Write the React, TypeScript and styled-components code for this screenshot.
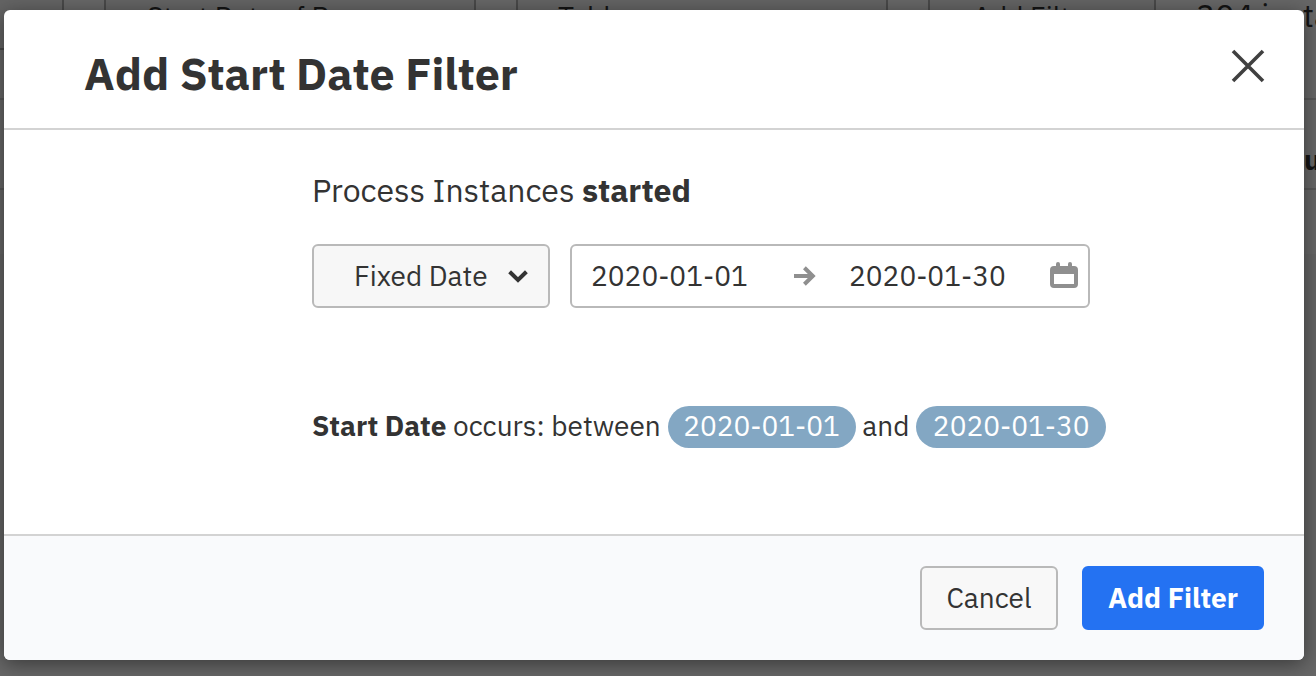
import React from 'react';
import styled, { createGlobalStyle } from 'styled-components';

const GlobalStyle = createGlobalStyle`
  *, *::before, *::after { box-sizing: border-box; }
  html, body { margin: 0; height: 100%; overflow: hidden; }
  body {
    background: #666;
    color: #333;
    font-family: "IBM Plex Sans", "Noto Sans CJK JP", "Noto Sans", sans-serif;
    font-size: 28px;
  }
  #root { height: 100%; }
  button { font-family: inherit; margin: 0; }
`;

const Screen = styled.div`
  position: relative;
  height: 676px;
  overflow: hidden;
`;

/* Report page, dimmed behind the dialog */
const Page = styled.div`
  height: 100%;
  background: linear-gradient(#676767 0 254px, #646464 254px 640px, #676767 640px);
`;

const Toolbar = styled.div`
  display: flex;
  height: 100px;
  border-bottom: 2px solid #585858;
`;

const PageButton = styled.div<{ $width: number; $indent: number }>`
  flex: none;
  width: ${p => p.$width}px;
  height: 50px;
  margin-right: 40px;
  padding-left: ${p => p.$indent}px;
  border: 2px solid #494949;
  border-top: 0;
  background: #646464;
  color: #141414;
  line-height: 33px;
  white-space: nowrap;
  &:first-child { border-left: 0; }
`;

const InstanceCount = styled.div`
  color: #141414;
  font-size: 32px;
  line-height: 31px;
  white-space: nowrap;
`;

const TableHead = styled.div`
  height: 90px;
  padding: 42px 0 0 1304px;
  border-bottom: 2px solid #585858;
  color: #141414;
  font-weight: 700;
  line-height: 35px;
  white-space: nowrap;
`;

const Dialog = styled.section`
  position: absolute;
  top: 10px;
  left: 4px;
  display: flex;
  flex-direction: column;
  width: 1300px;
  height: 650px;
  border-radius: 6px;
  background: #fff;
  box-shadow: 0 4px 20px rgba(0, 0, 0, 0.45);
  overflow: hidden;
`;

const Header = styled.header`
  display: flex;
  justify-content: space-between;
  height: 120px;
  padding: 33px 39px 0 80px;
  border-bottom: 2px solid #d3d3d3;
`;

const Title = styled.h1`
  margin: 0;
  font-size: 44.8px;
  font-weight: 700;
  line-height: 61px;
  white-space: nowrap;
`;

const CloseButton = styled.button`
  display: flex;
  width: 34px;
  height: 34px;
  margin-top: 6px;
  padding: 0;
  border: 0;
  background: none;
`;

const Body = styled.main`
  flex: 1;
  padding: 41px 0 0 308px;
`;

const Subtitle = styled.p`
  margin: 0 0 35px;
  font-size: 32px;
  line-height: 38px;
`;

const Controls = styled.div`
  display: flex;
  gap: 20px;
  height: 64px;
`;

const Select = styled.button`
  display: flex;
  align-items: center;
  justify-content: space-between;
  width: 238px;
  padding: 0 20px 0 40px;
  border: 2px solid #b9b9b9;
  border-radius: 6px;
  background: #f7f7f7;
  color: #333;
  font-size: 28px;
  line-height: 38px;
`;

const DateRange = styled.div`
  display: flex;
  align-items: center;
  width: 520px;
  padding: 0 10px 0 19px;
  border: 2px solid #b9b9b9;
  border-radius: 6px;
`;

const DateText = styled.span`
  width: 158px;
  line-height: 38px;
  white-space: nowrap;
`;

const RangeArrow = styled.svg`
  margin: 0 33px 0 45px;
`;

const CalendarIcon = styled.svg`
  margin: -2px 0 0 auto;
`;

const Preview = styled.p`
  display: flex;
  align-items: center;
  gap: 6.8px;
  height: 42px;
  margin: 98px 0 0;
  line-height: 38px;
  white-space: nowrap;
`;

const Chip = styled.span<{ $width: number }>`
  width: ${p => p.$width}px;
  height: 42px;
  border-radius: 21px;
  background: #83a7c3;
  color: #fff;
  line-height: 40px;
  text-align: center;
`;

const Phrase = styled.span`
  padding-bottom: 2px;
`;

const Footer = styled.footer`
  display: flex;
  justify-content: flex-end;
  gap: 24px;
  height: 126px;
  padding: 30px 40px;
  border-top: 2px solid #d3d3d3;
  background: #f9fafc;
`;

const Button = styled.button<{ $primary?: boolean }>`
  width: ${p => (p.$primary ? 182 : 138)}px;
  height: 64px;
  padding: 0;
  border: 2px solid ${p => (p.$primary ? '#2472f2' : '#b9b9b9')};
  border-radius: 6px;
  background: ${p => (p.$primary ? '#2472f2' : '#f8f8f8')};
  color: ${p => (p.$primary ? '#fff' : '#333')};
  font-size: 28px;
  font-weight: ${p => (p.$primary ? 700 : 400)};
  line-height: 38px;
`;

export default function App() {
  return (
    <Screen>
      <GlobalStyle />
      <Page aria-hidden>
        <Toolbar>
          <PageButton $width={64} $indent={0} />
          <PageButton $width={372} $indent={41}>Start Date of Process</PageButton>
          <PageButton $width={372} $indent={40}>Table</PageButton>
          <PageButton $width={228} $indent={43}>Add Filter</PageButton>
          <InstanceCount>304 instances</InstanceCount>
        </Toolbar>
        <TableHead>uration</TableHead>
      </Page>

      <Dialog role="dialog">
        <Header>
          <Title>Add Start Date Filter</Title>
          <CloseButton aria-label="Close">
            <svg width="34" height="34" viewBox="0 0 34 34" fill="none" stroke="#404040" strokeWidth="3.6">
              <path d="M2 2 32 32M32 2 2 32" />
            </svg>
          </CloseButton>
        </Header>

        <Body>
          <Subtitle>
            Process Instances <strong>started</strong>
          </Subtitle>
          <Controls>
            <Select>
              Fixed Date
              <svg width="20" height="14" viewBox="0 0 20 14" fill="none" stroke="#333" strokeWidth="4">
                <path d="M1.6 2.8 10 11 18.4 2.8" />
              </svg>
            </Select>
            <DateRange>
              <DateText>2020-01-01</DateText>
              <RangeArrow width="22" height="20" viewBox="0 0 22 20" fill="none" stroke="#8f8f8f" strokeWidth="4">
                <path d="M0 10H19M10.4 1.8 18.8 10 10.4 18.2" />
              </RangeArrow>
              <DateText>2020-01-30</DateText>
              <CalendarIcon width="28" height="26" viewBox="0 0 28 26">
                <path
                  fill="#8f8f8f"
                  fillRule="evenodd"
                  d="M6 4V2a2 2 0 0 1 4 0V4H18V2a2 2 0 0 1 4 0V4H24a4 4 0 0 1 4 4V22a4 4 0 0 1-4 4H4a4 4 0 0 1-4-4V8a4 4 0 0 1 4-4ZM4 12V22H24V12Z"
                />
              </CalendarIcon>
            </DateRange>
          </Controls>
          <Preview>
            <Phrase><strong>Start Date</strong> occurs: between</Phrase>
            <Chip $width={188}>2020-01-01</Chip>
            <Phrase>and</Phrase>
            <Chip $width={190}>2020-01-30</Chip>
          </Preview>
        </Body>

        <Footer>
          <Button>Cancel</Button>
          <Button $primary>Add Filter</Button>
        </Footer>
      </Dialog>
    </Screen>
  );
}
